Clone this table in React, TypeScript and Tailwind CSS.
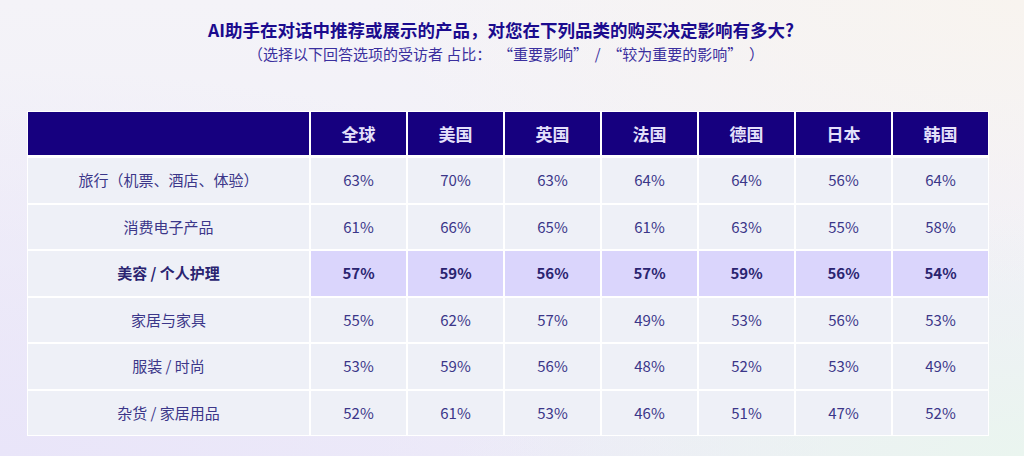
const font = "font-['Noto_Sans_CJK_SC','Noto_Sans',sans-serif]";

const columns = ["全球", "美国", "英国", "法国", "德国", "日本", "韩国"];

const rows = [
  { label: "旅行（机票、酒店、体验）", values: [63, 70, 63, 64, 64, 56, 64] },
  { label: "消费电子产品", values: [61, 66, 65, 61, 63, 55, 58] },
  { label: "美容 / 个人护理", values: [57, 59, 56, 57, 59, 56, 54], highlight: true },
  { label: "家居与家具", values: [55, 62, 57, 49, 53, 56, 53] },
  { label: "服装 / 时尚", values: [53, 59, 56, 48, 52, 53, 49] },
  { label: "杂货 / 家居用品", values: [52, 61, 53, 46, 51, 47, 52] },
];

export default function App() {
  return (
    <div
      className={`${font} relative h-[456px] w-[1024px] overflow-hidden bg-[#f1f0f7] bg-[radial-gradient(ellipse_at_100%_0%,#f8f4ef_0%,transparent_45%),radial-gradient(ellipse_at_100%_100%,#eaf5ef_0%,transparent_40%),radial-gradient(ellipse_at_0%_100%,#e9e5f9_0%,transparent_60%),linear-gradient(180deg,#f4f3f8_0%,#efedf8_100%)]`}
    >
      <div className="flex flex-col items-center pr-[22px] pt-[17px]">
        <h1 className="text-[17.5px] font-bold leading-[26px] text-[#1b0b8e]">
          AI助手在对话中推荐或展示的产品，对您在下列品类的购买决定影响有多大?
        </h1>
        <p className="pl-[10px] text-[15px] leading-[22px] text-[#3a2f9e]">
          （选择以下回答选项的受访者 占比：&nbsp;&nbsp;“重要影响”&nbsp;&nbsp;/&nbsp;&nbsp;“较为重要的影响”&nbsp;&nbsp;）
        </p>
      </div>

      <div className="ml-[27px] mt-[46px] w-[962px] bg-white p-[1px]">
        <div className="grid grid-cols-[281px_repeat(7,95px)] gap-[2px]">
          <div className="h-[43px] bg-[#16007f]" />
          {columns.map((c) => (
            <div
              key={c}
              className="flex h-[43px] items-center justify-center bg-[#16007f] text-[17px] font-bold text-[#e4e0fa]"
            >
              {c}
            </div>
          ))}
        </div>
        <div className="mt-[3px] grid grid-cols-[281px_repeat(7,95px)] gap-[2px]">
          {rows.map((r) => (
            <Row key={r.label} label={r.label} values={r.values} highlight={r.highlight} />
          ))}
        </div>
      </div>
    </div>
  );
}

function Row({ label, values, highlight }: { label: string; values: number[]; highlight?: boolean }) {
  const tone = highlight ? "font-bold text-[#2a2470]" : "font-normal text-[#3b3689]";
  return (
    <>
      <div className={`flex h-[44.5px] items-center justify-center bg-[#eef0f7] text-[15px] ${tone}`}>
        {label}
      </div>
      {values.map((v, i) => (
        <div
          key={i}
          className={`flex h-[44.5px] items-center justify-center text-[15px] ${tone} ${
            highlight ? "bg-[#dad5fc]" : "bg-[#eef0f7]"
          }`}
        >
          {v}%
        </div>
      ))}
    </>
  );
}
